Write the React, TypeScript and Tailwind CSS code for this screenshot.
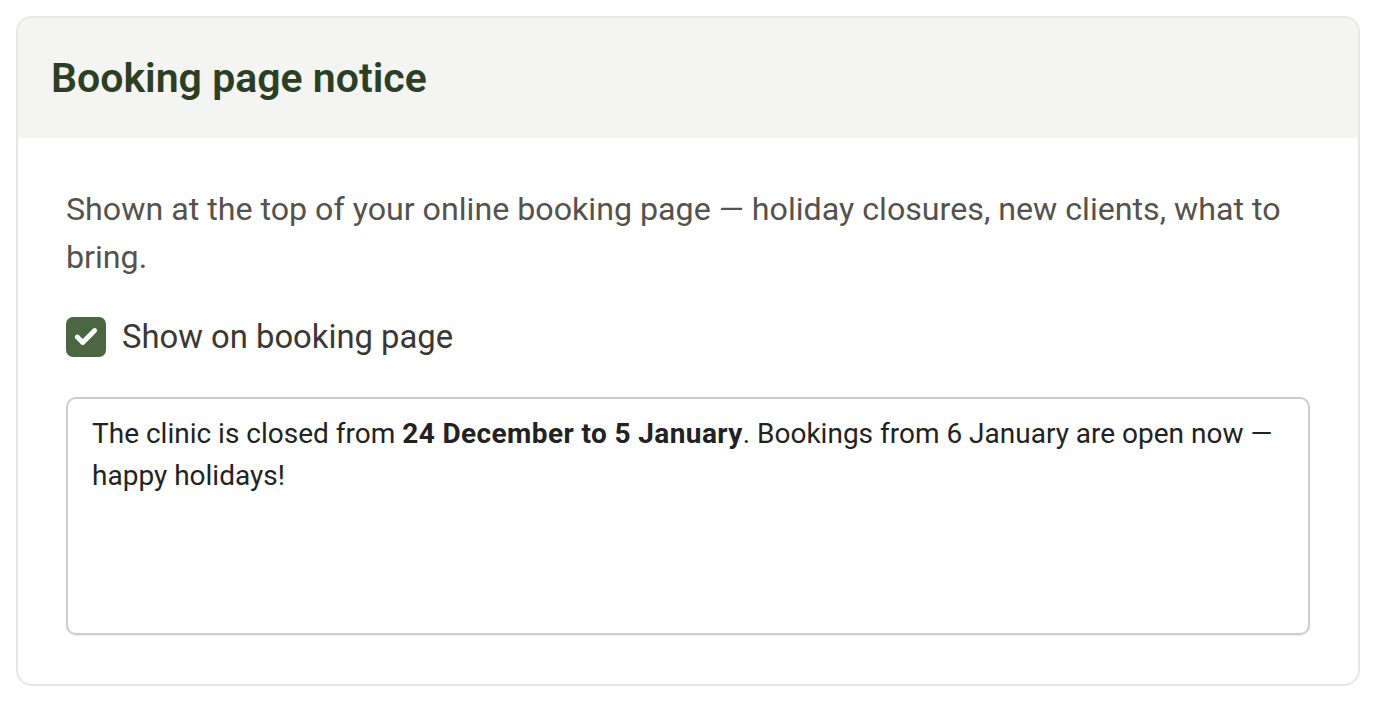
import { Check } from 'lucide-react';

export default function App() {
  return (
    <div className="min-h-screen bg-white p-4 font-['Roboto',sans-serif]">
      <section className="overflow-hidden rounded-2xl border-2 border-[#e6e6e4] bg-white">
        {/* Header */}
        <header className="flex h-[120px] items-center bg-[#f4f4f2] px-[33px]">
          <h2 className="text-[41px] leading-[48px] font-semibold text-[#2b3f24]">Booking page notice</h2>
        </header>

        {/* Body */}
        <div className="px-[48px] pt-[47px] pb-[49px]">
          <p className="text-[32.2px] leading-[48px] text-[#55524d]">
            Shown at the top of your online booking page — holiday closures, new clients, what to bring.
          </p>

          <label className="mt-[32px] flex h-[48px] items-center gap-[16px]">
            <span className="flex h-[40px] w-[40px] items-center justify-center rounded-[7px] bg-[#4a6741]">
              <Check className="h-[26px] w-[26px] text-white" strokeWidth={4.5} />
            </span>
            <span className="text-[32.8px] leading-[48px] text-[#3a3834]">Show on booking page</span>
          </label>

          <div className="mt-[36px] h-[238px] rounded-[10px] border-2 border-[#cfcdca] px-[24px] py-[14px] text-[28px] leading-[42px] text-[#222] shadow-[0_1px_2px_rgba(0,0,0,0.08)]">
            The clinic is closed from <strong className="font-bold tracking-[0.4px]">24 December to 5 January</strong>.
            Bookings from 6 January are open now — happy holidays!
          </div>
        </div>
      </section>
    </div>
  );
}
